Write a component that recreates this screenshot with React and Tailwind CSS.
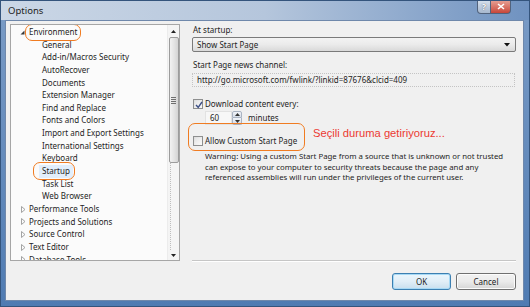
import React from "react";

const Expanded = () => (
  <svg width="5" height="5" viewBox="0 0 5 5" className="block">
    <polygon points="4.5,0.5 4.5,4.5 0.5,4.5" fill="#3a3a3a" />
  </svg>
);

const Collapsed = () => (
  <svg width="5" height="7" viewBox="0 0 5 7" className="block">
    <polygon points="0.5,0.5 4,3.5 0.5,6.5" fill="none" stroke="#9a9a9a" strokeWidth="0.9" />
  </svg>
);

const CheckBox = ({ checked }) => (
  <div className="w-[10px] h-[10px] border border-[#8e8f8f] bg-gradient-to-br from-[#dcdcdc] to-[#fbfbfb] p-[1px] shrink-0">
    <div className="w-full h-full bg-gradient-to-br from-[#e4e4e4] to-[#f8f8f8] relative">
      {checked && (
        <svg width="8" height="8" viewBox="0 0 8 8" className="absolute left-[0px] top-[0px]">
          <path d="M1 4 L3.2 6.3 L7 1" fill="none" stroke="#3d4f86" strokeWidth="1.4" />
        </svg>
      )}
    </div>
  </div>
);

const children = [
  "General",
  "Add-in/Macros Security",
  "AutoRecover",
  "Documents",
  "Extension Manager",
  "Find and Replace",
  "Fonts and Colors",
  "Import and Export Settings",
  "International Settings",
  "Keyboard",
  "Startup",
  "Task List",
  "Web Browser",
];

const roots = [
  "Performance Tools",
  "Projects and Solutions",
  "Source Control",
  "Text Editor",
  "Database Tools",
];

export default function App() {
  return (
    <div className="w-[530px] h-[307px] overflow-hidden flex flex-col bg-gradient-to-b from-[#7b9cc6] to-[#4f7bb2] border border-[#34547c] font-['Noto_Sans',sans-serif] text-[8px] text-[#1e1e1e] relative">
      {/* title bar */}
      <div className="h-[20px] flex items-start justify-between bg-gradient-to-r from-[#cbd7e6] via-[#b5c6dc] to-[#6f92c0] -mt-[1px] -mx-[1px]">
        <div className="pl-[8px] pt-[4px] text-[9.5px] text-[#222] leading-[13px]">Options</div>
        <div className="flex mr-[19px]">
          <div className="w-[14px] h-[14px] border border-[#52637d] border-t-0 rounded-bl-[4px] bg-gradient-to-b from-[#d7e1ee] to-[#a7b8ce] flex items-center justify-center text-[9px] font-bold text-white leading-none [text-shadow:0_0_1px_#334]">
            ?
          </div>
          <div className="w-[20px] h-[14px] border border-[#52637d] border-t-0 border-l-0 rounded-br-[4px] bg-gradient-to-b from-[#e7a398] to-[#c8453a] flex items-center justify-center">
            <svg width="8" height="7" viewBox="0 0 8 7">
              <path d="M1 1 L7 6 M7 1 L1 6" stroke="#fff" strokeWidth="1.6" />
            </svg>
          </div>
        </div>
      </div>

      {/* content */}
      <div className="ml-[4px] w-[519px] h-[281px] border border-[#6f88ab] bg-[#f0f0f0] flex flex-col pt-[3px] pl-[4px] pr-[7px] pb-[10px]">
        <div className="flex h-[238px]">
          {/* tree */}
          <div className="w-[170px] h-[237px] border border-[#a6a6a6] bg-[#fbfbfb] flex overflow-hidden">
            <div className="flex-1 pt-[1px] overflow-hidden">
              <div className="h-[12.65px] flex items-center">
                <div className="w-[18px] pl-[9px] flex items-center"><Expanded /></div>
                <span className="relative leading-[12.65px]">
                  Environment
                  <span className="absolute -left-[4px] -right-[4px] -top-[2px] -bottom-[2px] border-[1.5px] border-[#f07c22] rounded-[7px]" />
                </span>
              </div>
              {children.map((c) => (
                <div key={c} className="h-[12.65px] flex items-center pl-[28px]">
                  {c === "Startup" ? (
                    <span className="relative leading-[12.65px] px-[3px] bg-[#e2eefb]">
                      {c}
                      <span className="absolute -left-[6px] -right-[2px] -top-[3px] -bottom-[2px] border-[1.5px] border-[#f07c22] rounded-[7px]" />
                    </span>
                  ) : (
                    <span className="leading-[12.65px] px-[3px]">{c}</span>
                  )}
                </div>
              ))}
              {roots.map((r) => (
                <div key={r} className="h-[12.65px] flex items-center">
                  <div className="w-[18px] pl-[10px] flex items-center"><Collapsed /></div>
                  <span className="leading-[12.65px]">{r}</span>
                </div>
              ))}
            </div>
            {/* scrollbar */}
            <div className="w-[12px] bg-[#f4f4f4] border-l border-[#ececec] flex flex-col items-center">
              <div className="h-[12px] flex items-center justify-center">
                <svg width="5" height="3" viewBox="0 0 5 3"><polygon points="0,3 2.5,0 5,3" fill="#222" /></svg>
              </div>
              <div className="w-[10px] h-[126px] border border-[#9c9c9c] rounded-[2px] bg-gradient-to-r from-[#f2f2f2] via-[#e4e4e4] to-[#d4d4d4] flex flex-col items-center justify-center gap-[1px]">
                <div className="w-[5px] h-[1px] bg-[#6e6e6e]" />
                <div className="w-[5px] h-[1px] bg-[#6e6e6e]" />
                <div className="w-[5px] h-[1px] bg-[#6e6e6e]" />
                <div className="w-[5px] h-[1px] bg-[#6e6e6e]" />
              </div>
              <div className="flex-1 w-[1px] ml-[-7px] border-l border-dotted border-[#bdbdbd]" />
              <div className="h-[10px] flex items-center justify-center">
                <svg width="5" height="3" viewBox="0 0 5 3"><polygon points="0,0 2.5,3 5,0" fill="#222" /></svg>
              </div>
            </div>
          </div>

          {/* right panel */}
          <div className="relative flex-1 ml-[12px] h-[238px] flex flex-col">
            <div className="h-[12px] leading-[12px] pl-[1px]">At startup:</div>
            <div className="mt-[1px] h-[15px] border border-[#7a7a7a] rounded-[2px] bg-gradient-to-b from-[#f3f3f3] via-[#ebebeb] to-[#d9d9d9] flex items-center justify-between pl-[4px] pr-[5px]">
              <span>Show Start Page</span>
              <svg width="6" height="4" viewBox="0 0 6 4"><polygon points="0,0 6,0 3,3.5" fill="#111" /></svg>
            </div>
            <div className="mt-[7px] h-[12px] leading-[12px] pl-[1px]">Start Page news channel:</div>
            <div className="mt-[2px] mr-[1px] h-[14px] border border-dotted border-[#c4c4c4] bg-[#f0f0f0] flex items-center pl-[4px]">
              http://go.microsoft.com/fwlink/?linkid=87676&amp;clcid=409
            </div>
            <div className="mt-[10px] h-[13px] flex items-center gap-[2px] pl-[1px]">
              <CheckBox checked />
              <span>Download content every:</span>
            </div>
            <div className="mt-[1px] h-[14px] flex items-center pl-[13px]">
              <div className="w-[27px] h-[14px] border border-[#e2e2e2] bg-[#f7f7f7] flex items-center pl-[4px]">60</div>
              <div className="w-[10px] h-[14px] flex flex-col">
                <div className="h-[7px] border border-[#a9b3c2] rounded-t-[2px] bg-gradient-to-b from-[#f1f4f8] to-[#d6dde8] flex items-center justify-center">
                  <svg width="5" height="3" viewBox="0 0 5 3"><polygon points="0,3 2.5,0 5,3" fill="#333" /></svg>
                </div>
                <div className="h-[7px] border border-t-0 border-[#a9b3c2] rounded-b-[2px] bg-gradient-to-b from-[#f1f4f8] to-[#d6dde8] flex items-center justify-center">
                  <svg width="5" height="3" viewBox="0 0 5 3"><polygon points="0,0 5,0 2.5,3" fill="#333" /></svg>
                </div>
              </div>
              <span className="ml-[6px]">minutes</span>
            </div>
            <div className="mt-[9px] h-[13px] flex items-center gap-[2px] pl-[1px]">
              <CheckBox />
              <span>Allow Custom Start Page</span>
            </div>
            <div className="mt-[4px] pl-[13px] pr-[6px] leading-[10.5px] text-[7.8px]">
              Warning: Using a custom Start Page from a source that is unknown or not trusted can expose to your computer to security threats because the page and any referenced assemblies will run under the privileges of the current user.
            </div>
            <div className="mt-auto h-[2px] border-t border-[#c6c6c6] border-b border-b-white" />

            {/* annotations */}
            <div className="absolute left-[-4px] top-[99px] w-[117px] h-[28px] border-[1.5px] border-[#f07c22] rounded-[7px]" />
            <div className="absolute left-[121px] top-[102px] font-['Liberation_Sans',Arial,sans-serif] text-[11.2px] text-[#ec3a32] leading-[14px] whitespace-nowrap">
              Seçili duruma getiriyoruz...
            </div>
          </div>
        </div>

        {/* buttons */}
        <div className="mt-[11px] flex justify-end gap-[5px] pr-[0px]">
          <div className="w-[59px] h-[17px] rounded-[3px] border border-[#3c7fb1] bg-gradient-to-b from-[#eaf6fd] via-[#e1eef7] to-[#c9dfee] shadow-[inset_0_0_0_1px_#a7d9f5] flex items-center justify-center">
            OK
          </div>
          <div className="w-[60px] h-[17px] rounded-[3px] border border-[#707070] bg-gradient-to-b from-[#f2f2f2] via-[#ebebeb] to-[#d6d6d6] shadow-[inset_0_0_0_1px_#fcfcfc] flex items-center justify-center">
            Cancel
          </div>
        </div>
      </div>
    </div>
  );
}
